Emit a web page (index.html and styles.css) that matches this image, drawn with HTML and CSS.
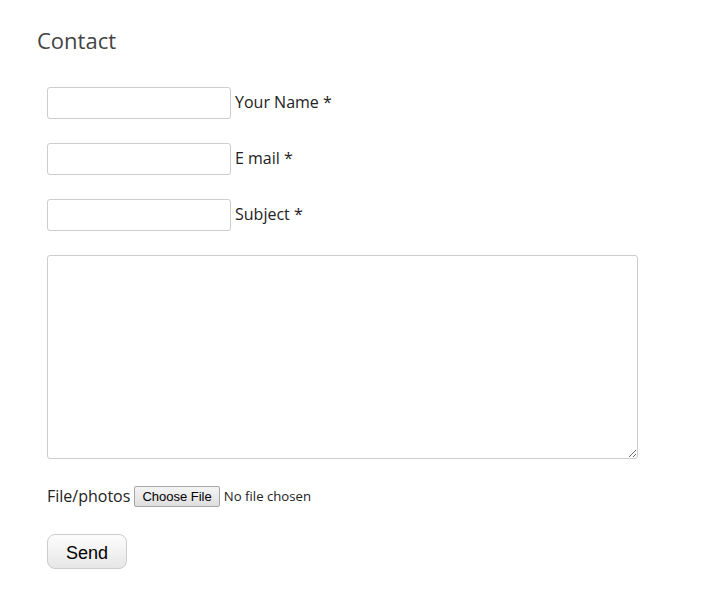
FILE: index.html
```html
<!DOCTYPE html>
<html>
<head>
<meta charset="utf-8">
<link rel="stylesheet" href="styles.css">
</head>
<body>
<div class="page">
  <h2 class="title">Contact</h2>
  <form class="form">
    <div class="row"><input class="text" type="text"><label class="label">Your Name *</label></div>
    <div class="row"><input class="text" type="text"><label class="label">E mail *</label></div>
    <div class="row"><input class="text" type="text"><label class="label">Subject *</label></div>
    <textarea class="message"></textarea>
    <div class="file-row"><span class="label">File/photos</span><input class="file" type="file"></div>
    <button class="send" type="button">Send</button>
  </form>
</div>
</body>
</html>
```
FILE: styles.css
```css
html, body { margin: 0; padding: 0; background: #fff; }
body { font-family: "Open Sans", sans-serif; color: #222; }
.page { padding: 25px 0 0 37px; }
.title { margin: 0; font-weight: 400; font-size: 22px; line-height: 30px; color: #444; }
.form { display: flex; flex-direction: column; align-items: flex-start; padding: 32px 0 0 10px; }
.row { display: flex; align-items: center; gap: 4px; margin-bottom: 24px; }
.text { box-sizing: border-box; width: 184px; height: 32px; margin: 0; border: 1px solid #ccc; border-radius: 3px; font: 14px "Open Sans", sans-serif; padding: 4px 6px; }
.row .label { margin-bottom: 2px; }
.label { font-size: 16px; line-height: 22px; color: #222; }
.message { box-sizing: border-box; width: 591px; height: 204px; margin: 0; border: 1px solid #ccc; border-radius: 3px; font: 14px "Open Sans", sans-serif; resize: both; }
.file-row { display: flex; align-items: center; gap: 4px; margin-top: 26px; }
.file { font: 13.2px "Open Sans", sans-serif; color: #222; margin: 0; }
.file::file-selector-button { font: 13px Arial, "Liberation Sans", sans-serif; color: #000; background: linear-gradient(#f4f4f4, #dedede); border: 1px solid #a6a6a6; border-radius: 2px; padding: 2px 7px; margin-right: 4px; height: 21px; }
.send { margin-top: 27px; box-sizing: border-box; width: 80px; height: 35px; border: 1px solid #ccc; border-radius: 8px; background: linear-gradient(#fdfdfd, #e6e6e6); font: 18px Arial, "Liberation Sans", sans-serif; color: #000; padding: 3px 0 0; }
```
